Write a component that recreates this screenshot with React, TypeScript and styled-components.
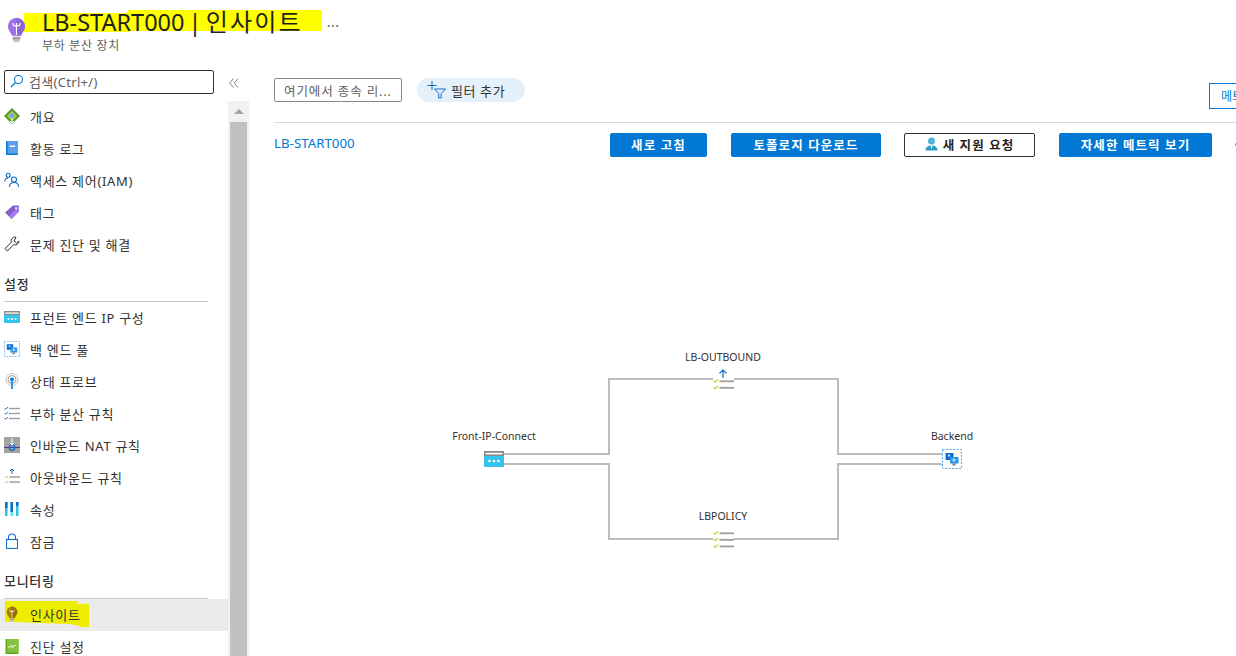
import React from 'react';
import styled, { createGlobalStyle } from 'styled-components';

const FONT = `"Noto Sans", "Noto Sans CJK KR", sans-serif`;

const Global = createGlobalStyle`
  html, body { margin: 0; padding: 0; background: #fff; }
  body { font-family: ${FONT}; color: #323130; }
  * { box-sizing: border-box; }
`;

const Page = styled.div`
  position: relative;
  width: 1236px;
  height: 656px;
  overflow: hidden;
  background: #fff;
  display: flex;
  flex-direction: column;
`;

/* ---------- header ---------- */
const Header = styled.header`
  position: relative;
  height: 70px;
  flex: none;
  display: flex;
  padding: 7px 0 0 7px;
  gap: 16px;
`;
const HeaderIcon = styled.div`
  width: 19px;
  margin-top: 10px;
  flex: none;
  position: relative;
  z-index: 2;
`;
const TitleBlock = styled.div`
  display: flex;
  flex-direction: column;
`;
const TitleRow = styled.div`
  display: flex;
  align-items: center;
  height: 30px;
`;
const Title = styled.h1`
  position: relative;
  z-index: 2;
  margin: 0;
  font-size: 23.5px;
  line-height: 30px;
  font-weight: 400;
  word-spacing: -2px;
  color: #1f1f1f;
  white-space: nowrap;
`;
const TitleKo = styled.span`
  font-size: 24px;
  letter-spacing: 2.2px;
`;
const More = styled.span`
  position: relative;
  z-index: 2;
  margin-left: 24px;
  margin-top: -2px;
  font-size: 14px;
  color: #605e5c;
  letter-spacing: 0.5px;
`;
const Subtitle = styled.div`
  font-size: 12px;
  line-height: 16px;
  color: #605e5c;
  margin-top: 1px;
  letter-spacing: 0.7px;
`;
const Marker = styled.div<{ $l: number; $t: number; $w: number; $h: number }>`
  position: absolute;
  left: ${p => p.$l}px;
  top: ${p => p.$t}px;
  width: ${p => p.$w}px;
  height: ${p => p.$h}px;
  background: #ffff00;
  z-index: 1;
`;

/* ---------- body ---------- */
const Body = styled.div`
  flex: 1;
  min-height: 0;
  display: flex;
`;
const Sidebar = styled.aside`
  width: 249px;
  flex: none;
  display: flex;
  flex-direction: column;
`;
const SearchRow = styled.div`
  height: 31px;
  flex: none;
  display: flex;
  align-items: flex-start;
  padding-left: 4px;
`;
const SearchBox = styled.div`
  width: 210px;
  height: 24px;
  border: 1px solid #323130;
  border-radius: 2px;
  display: flex;
  align-items: center;
  gap: 5px;
  padding: 0 0 2px 5px;
  font-size: 13px;
  letter-spacing: 0.3px;
  color: #605e5c;
`;
const Collapse = styled.span`
  margin-left: 15px;
  margin-top: 8px;
  line-height: 0;
`;
const SideBody = styled.div`
  flex: 1;
  min-height: 0;
  display: flex;
`;
const Nav = styled.nav`
  width: 228px;
  flex: none;
`;
const NavRow = styled.div<{ $active?: boolean }>`
  position: relative;
  height: 32px;
  display: flex;
  align-items: center;
  gap: 10px;
  padding: 0 0 2px 4px;
  font-size: 13px;
  color: #323130;
  letter-spacing: 0.7px;
  white-space: nowrap;
  background: ${p => (p.$active ? '#ebebeb' : 'transparent')};
  & > span { position: relative; z-index: 2; }
`;
const IconSlot = styled.span`
  width: 16px;
  height: 18px;
  flex: none;
  display: flex;
  align-items: center;
  justify-content: center;
`;
const SectionTitle = styled.div`
  margin: 15px 20px 0 4px;
  height: 26px;
  font-size: 13px;
  font-weight: 500;
  line-height: 17px;
  letter-spacing: 0.7px;
  color: #323130;
  border-bottom: 1px solid #c8c6c4;
`;
const RowMark = styled.div`
  position: absolute;
  left: 5px;
  top: 2px;
  width: 84px;
  height: 26px;
  background: #eded00;
  clip-path: polygon(0 0, 86% 0, 86% 11%, 100% 11%, 100% 100%, 89% 100%, 89% 96%, 77% 88%, 0 80%);
`;
const Scrollbar = styled.div`
  width: 21px;
  flex: none;
  background: #f1f1f1;
  display: flex;
  flex-direction: column;
`;
const ScrollUp = styled.div`
  height: 21px;
  flex: none;
  display: flex;
  align-items: center;
  justify-content: center;
  &::before {
    content: '';
    border-left: 5px solid transparent;
    border-right: 5px solid transparent;
    border-bottom: 5px solid #a3a3a3;
  }
`;
const ScrollThumb = styled.div`
  flex: 1;
  margin: 0 2px;
  background: #c1c1c1;
`;

/* ---------- main ---------- */
const Main = styled.main`
  flex: 1;
  min-width: 0;
  position: relative;
  padding: 8px 0 0 25px;
  display: flex;
  flex-direction: column;
`;
const FilterBar = styled.div`
  height: 45px;
  flex: none;
  display: flex;
  align-items: flex-start;
  gap: 15px;
  border-bottom: 1px solid #d9d9d9;
  position: relative;
`;
const DependencyInput = styled.div`
  width: 128px;
  height: 24px;
  border: 1px solid #8a8886;
  border-radius: 2px;
  display: flex;
  align-items: center;
  padding-left: 9px;
  font-size: 12.5px;
  color: #605e5c;
  letter-spacing: 0.9px;
  white-space: nowrap;
`;
const FilterPill = styled.div`
  width: 108px;
  height: 24px;
  border-radius: 12px;
  background: #e4f0fa;
  display: flex;
  align-items: center;
  padding-left: 10px;
  gap: 4px;
  font-size: 13px;
  color: #323130;
  letter-spacing: 0.6px;
  white-space: nowrap;
`;
const MetricTab = styled.div`
  position: absolute;
  left: 935px;
  top: 5px;
  width: 60px;
  height: 26px;
  border: 1px solid #0078d4;
  display: flex;
  align-items: center;
  padding-left: 11px;
  font-size: 12px;
  color: #0078d4;
  white-space: nowrap;
`;
const ActionRow = styled.div`
  position: relative;
  flex: none;
  height: 35px;
  padding-top: 10px;
  display: flex;
  align-items: flex-start;
`;
const ResourceLink = styled.a`
  width: 336px;
  flex: none;
  font-size: 13.3px;
  line-height: 20px;
  color: #0078d4;
`;
const ActionButton = styled.button<{ $w: number; $gap: number; $outline?: boolean }>`
  width: ${p => p.$w}px;
  height: 24px;
  margin-right: ${p => p.$gap}px;
  flex: none;
  border-radius: 2px;
  border: 1px solid ${p => (p.$outline ? '#323130' : '#0078d4')};
  background: ${p => (p.$outline ? '#fff' : '#0078d4')};
  color: ${p => (p.$outline ? '#1f1f1f' : '#fff')};
  font-family: ${FONT};
  font-size: 12.5px;
  font-weight: 700;
  letter-spacing: 1.1px;
  display: flex;
  align-items: center;
  justify-content: center;
  gap: 5px;
  padding: 0 0 2px;
  white-space: nowrap;
`;
const EdgeDot = styled.span`
  position: absolute;
  left: 961px;
  top: 20px;
  width: 3px;
  height: 3px;
  background: #8a8886;
  border-radius: 50%;
`;

/* ---------- diagram (free canvas, offset from page 249,70) ---------- */
const Canvas = styled.div`
  position: absolute;
  left: 0;
  top: 0;
  right: 0;
  bottom: 0;
  pointer-events: none;
`;
const Wires = styled.svg`
  position: absolute;
  left: 0;
  top: 0;
`;
const NodeLabel = styled.div<{ $x: number; $y: number }>`
  position: absolute;
  left: ${p => p.$x - 249}px;
  top: ${p => p.$y - 70}px;
  transform: translate(-50%, -50%);
  font-size: 10.5px;
  line-height: 14px;
  color: #323130;
  white-space: nowrap;
`;
const NodeIcon = styled.div<{ $x: number; $y: number }>`
  position: absolute;
  left: ${p => p.$x - 249}px;
  top: ${p => p.$y - 70}px;
  line-height: 0;
  background: #fff;
`;

/* ---------- icons ---------- */
const Bulb = ({ size = 19, c = '#9a72e6', d = '#7a55c5' }: { size?: number; c?: string; d?: string }) => (
  <svg width={size} height={size * 1.4} viewBox="0 0 22 31">
    <path d="M11 1a10 10 0 0 0-10 10c0 4 2.600 6.500 4 9 .5 1 .6 1.500.8 2h10.400c.2-.5.3-1 .8-2 1.400-2.500 4-5 4-9A10 10 0 0 0 11 1z" fill={c} />
    <path d="M11 1a10 10 0 0 1 10 10c0 4-2.600 6.500-4 9-.5 1-.6 1.500-.8 2H11z" fill={d} opacity=".45" />
    <path d="M11 21V10M7 7v1.500a2 2 0 0 0 4 0V7M11 8.500a2 2 0 0 0 4 0V7" fill="none" stroke="#fff" strokeWidth="1.300" />
    <rect x="6.500" y="23" width="9" height="3.500" rx="1" fill="#a19f9d" />
    <rect x="7.500" y="26.500" width="7" height="3" rx="1" fill="#c8c6c4" />
  </svg>
);
const SearchIcon = () => (
  <svg width="14" height="14" viewBox="0 0 14 14">
    <circle cx="8.500" cy="5.500" r="4" fill="none" stroke="#0078d4" strokeWidth="1.100" />
    <path d="M5.500 8.500L1 13" stroke="#0078d4" strokeWidth="1.200" />
  </svg>
);
const ChevronsLeft = () => (
  <svg width="10" height="10" viewBox="0 0 10 10" fill="none" stroke="#8a8886" strokeWidth="1">
    <path d="M4.500 .5L.7 5l3.800 4.500M9 .5L5.200 5 9 9.500" />
  </svg>
);
const OverviewIcon = () => (
  <svg width="16" height="16" viewBox="0 0 16 16">
    <path d="M8 0l8 8-8 8-8-8z" fill="#5e9624" />
    <path d="M8 3l5 5-5 5-5-5z" fill="#a4cf5c" />
    <circle cx="8" cy="7.500" r="2.200" fill="#6aa6e8" />
    <path d="M8 10v5M6 13l2 2 2-2" stroke="#fff" strokeWidth="1" fill="none" />
  </svg>
);
const LogIcon = () => (
  <svg width="16" height="16" viewBox="0 0 16 16">
    <rect x="2" y="1" width="12" height="14" rx="1" fill="#0078d4" />
    <rect x="3.500" y="1" width="10.500" height="12.500" fill="#5ea0ef" />
    <rect x="6" y="5.500" width="5" height="1.500" fill="#fff" />
  </svg>
);
const PeopleIcon = () => (
  <svg width="16" height="16" viewBox="0 0 16 16" fill="none" stroke="#0f6cc9" strokeWidth="1.100">
    <circle cx="4.200" cy="3.200" r="2" />
    <path d="M.7 9.500c0-2 1.500-3.300 3.500-3.300" />
    <circle cx="10" cy="7.500" r="2.500" />
    <path d="M5.500 15c0-3 2-4.500 4.500-4.500s4.500 1.500 4.500 4.500" />
  </svg>
);
const TagIcon = () => (
  <svg width="16" height="16" viewBox="0 0 16 16">
    <path d="M9 1.500h6v6L7.500 15 1 8.500z" fill="#8661c5" />
    <path d="M15 1.500v6L7.500 15 5 12.500z" fill="#a67af4" />
    <circle cx="12" cy="4.300" r="1" fill="#fff" />
  </svg>
);
const WrenchIcon = () => (
  <svg width="16" height="16" viewBox="0 0 16 16" fill="none" stroke="#323130" strokeWidth="1">
    <path d="M11 1a4 4 0 0 0-3.700 5.300L1 12.700 3.300 15l6.400-6.300A4 4 0 0 0 15 5l-2.500 2L10 5l2-3.700z" />
  </svg>
);
const FrontendIcon = ({ w = 16 }: { w?: number }) => (
  <svg width={w} height={w * 0.8} viewBox="0 0 20 16">
    <rect width="20" height="16" rx="1" fill="#35c4ec" />
    <rect width="20" height="5" fill="#8a8a8a" />
    <rect x="1.500" y="1.800" width="17" height="1.600" fill="#fff" />
    <circle cx="5.500" cy="10" r="1.300" fill="#fff" />
    <circle cx="10" cy="10" r="1.300" fill="#fff" />
    <circle cx="14.500" cy="10" r="1.300" fill="#fff" />
  </svg>
);
const PoolIcon = ({ w = 16 }: { w?: number }) => (
  <svg width={w} height={w} viewBox="0 0 20 20">
    <rect x=".5" y=".5" width="19" height="19" fill="#fff" stroke="#4ba3ec" strokeWidth="1" strokeDasharray="2 1.500" />
    <rect x="3.500" y="4" width="8" height="7" fill="#0f6cc9" />
    <rect x="8" y="8" width="8.500" height="6.500" fill="#2f97ea" />
    <circle cx="7" cy="6.500" r="1.300" fill="#9fd0f6" />
    <circle cx="12" cy="11" r="1.500" fill="#bfe2fb" />
    <rect x="10.500" y="14.500" width="3" height="2" fill="#7a7a7a" />
  </svg>
);
const ProbeIcon = () => (
  <svg width="16" height="16" viewBox="0 0 16 16" fill="none">
    <circle cx="8" cy="6.500" r="6" stroke="#c8c6c4" />
    <circle cx="8" cy="6.500" r="4" stroke="#a19f9d" />
    <circle cx="8" cy="6.500" r="2" fill="#0078d4" />
    <rect x="7" y="7" width="2" height="9" fill="#2f97ea" />
  </svg>
);
const RulesIcon = ({ color = '#0f6cc9', w = 16, rows = 3 }: { color?: string; w?: number; rows?: number }) => (
  <svg width={w} height={w * 0.875} viewBox="0 0 16 14" fill="none">
    {Array.from({ length: rows }).map((_, i) => {
      const y = 2 + i * 5;
      return (
        <g key={i}>
          <path d={`M.5 ${y}l1.200 1.200L4 ${y - 1}`} stroke={color} strokeWidth=".9" />
          <path d={`M5 ${y + 0.5}H16`} stroke="#a19f9d" strokeWidth="1.400" />
        </g>
      );
    })}
  </svg>
);
const InboundIcon = () => (
  <svg width="16" height="16" viewBox="0 0 16 16">
    <rect width="16" height="16" fill="#a3a3a3" />
    <path d="M0 10.500h16" stroke="#5c2d91" strokeWidth="1" />
    <circle cx="8" cy="10.500" r="2.800" fill="none" stroke="#0f6cc9" strokeWidth="1.300" />
    <path d="M8 1v7M6 6l2 2 2-2" stroke="#fff" strokeWidth="1" fill="none" />
  </svg>
);
const OutboundIcon = () => (
  <svg width="16" height="18" viewBox="0 0 16 18" fill="none">
    <path d="M8 6V1M6 3l2-2 2 2" stroke="#0f6cc9" strokeWidth="1" />
    <path d="M1 9l1 1 2-2M1 14l1 1 2-2" stroke="#b8d432" strokeWidth="1" />
    <path d="M5.500 9H16M5.500 14H16" stroke="#a19f9d" strokeWidth="1.300" />
  </svg>
);
const PropsIcon = () => (
  <svg width="16" height="16" viewBox="0 0 16 16">
    <rect x="1" y="1" width="2.500" height="14" fill="#32bedd" />
    <rect x="6.500" y="1" width="2.500" height="14" fill="#50e6ff" />
    <rect x="12" y="1" width="2.500" height="14" fill="#32bedd" />
    <rect x="1" y="1" width="2.500" height="6" fill="#0f6cc9" />
    <rect x="6.500" y="1" width="2.500" height="10" fill="#0f6cc9" />
    <rect x="12" y="1" width="2.500" height="4" fill="#0f6cc9" />
  </svg>
);
const LockIcon = () => (
  <svg width="16" height="16" viewBox="0 0 16 16" fill="none" stroke="#0f6cc9" strokeWidth="1.100">
    <rect x="2.500" y="6.500" width="11" height="9" />
    <path d="M4.500 6.500V4.500a3.500 3.500 0 0 1 7 0v2" />
  </svg>
);
const DiagIcon = () => (
  <svg width="16" height="16" viewBox="0 0 16 16">
    <rect x="1.500" y="1" width="13" height="15" fill="#5ea614" />
    <rect x="3" y="1" width="11.500" height="13.500" fill="#86c440" />
    <path d="M4 9h2l1.500-2 1 3 1.500-2.500h2" stroke="#fff" strokeWidth=".8" fill="none" />
  </svg>
);
const FilterIcon = () => (
  <svg width="20" height="18" viewBox="0 0 20 18" fill="none" stroke="#0f6cc9" strokeWidth="1">
    <path d="M5 0v9M.5 4.500h9" />
    <path d="M7.500 8h11l-4.300 4.500V17h-2.500v-4.500z" />
  </svg>
);
const PersonIcon = () => (
  <svg width="13" height="14" viewBox="0 0 13 14">
    <circle cx="6.500" cy="4" r="3.500" fill="#4fb4dc" />
    <path d="M.5 13.500c0-3.500 2.500-5 6-5s6 1.500 6 5z" fill="#2f9cc6" />
    <path d="M5.500 8.500h2L6.500 12z" fill="#fff" />
  </svg>
);
const OutArrow = () => (
  <svg width="10" height="9" viewBox="0 0 10 9" fill="none" stroke="#0f6cc9" strokeWidth="1.200">
    <path d="M5 9V1M1.500 4.200L5 1l3.500 3.200" />
  </svg>
);

/* ---------- data ---------- */
type Item = { label: string; icon: React.ReactNode; active?: boolean };
type Section = { title?: string; items: Item[] };

const sections: Section[] = [
  {
    items: [
      { label: '개요', icon: <OverviewIcon /> },
      { label: '활동 로그', icon: <LogIcon /> },
      { label: '액세스 제어(IAM)', icon: <PeopleIcon /> },
      { label: '태그', icon: <TagIcon /> },
      { label: '문제 진단 및 해결', icon: <WrenchIcon /> },
    ],
  },
  {
    title: '설정',
    items: [
      { label: '프런트 엔드 IP 구성', icon: <FrontendIcon /> },
      { label: '백 엔드 풀', icon: <PoolIcon /> },
      { label: '상태 프로브', icon: <ProbeIcon /> },
      { label: '부하 분산 규칙', icon: <RulesIcon /> },
      { label: '인바운드 NAT 규칙', icon: <InboundIcon /> },
      { label: '아웃바운드 규칙', icon: <OutboundIcon /> },
      { label: '속성', icon: <PropsIcon /> },
      { label: '잠금', icon: <LockIcon /> },
    ],
  },
  {
    title: '모니터링',
    items: [
      { label: '인사이트', icon: <Bulb size={12} c="#a87f00" d="#7a5c00" />, active: true },
      { label: '진단 설정', icon: <DiagIcon /> },
    ],
  },
];

const buttons = [
  { label: '새로 고침', w: 97, gap: 24 },
  { label: '토폴로지 다운로드', w: 150, gap: 23 },
  { label: '새 지원 요청', w: 131, gap: 24, outline: true },
  { label: '자세한 메트릭 보기', w: 153, gap: 0 },
];

const X = (v: number) => v - 249;
const Y = (v: number) => v - 70;
const wirePath = (pts: [number, number][]) =>
  pts.map(([x, y], i) => `${i ? 'L' : 'M'}${X(x)} ${Y(y)}`).join(' ');

const upperWire = wirePath([[504, 454], [609, 454], [609, 379], [838, 379], [838, 454], [945, 454]]);
const lowerWire = wirePath([[504, 464], [609, 464], [609, 539], [838, 539], [838, 464], [945, 464]]);

export default function App() {
  return (
    <Page>
      <Global />
      <Marker $l={24} $t={13} $w={105} $h={19} />
      <Marker $l={128} $t={10} $w={194} $h={21} />
      <Header>
        <HeaderIcon>
          <Bulb />
        </HeaderIcon>
        <TitleBlock>
          <TitleRow>
            <Title>LB-START000 | <TitleKo>인사이트</TitleKo></Title>
            <More>...</More>
          </TitleRow>
          <Subtitle>부하 분산 장치</Subtitle>
        </TitleBlock>
      </Header>
      <Body>
        <Sidebar>
          <SearchRow>
            <SearchBox>
              <SearchIcon />
              검색(Ctrl+/)
            </SearchBox>
            <Collapse><ChevronsLeft /></Collapse>
          </SearchRow>
          <SideBody>
            <Nav>
              {sections.map((s, i) => (
                <React.Fragment key={i}>
                  {s.title && <SectionTitle>{s.title}</SectionTitle>}
                  {s.items.map(it => (
                    <NavRow key={it.label} $active={it.active}>
                      {it.active && <RowMark />}
                      <IconSlot>{it.icon}</IconSlot>
                      <span>{it.label}</span>
                    </NavRow>
                  ))}
                </React.Fragment>
              ))}
            </Nav>
            <Scrollbar>
              <ScrollUp />
              <ScrollThumb />
            </Scrollbar>
          </SideBody>
        </Sidebar>
        <Main>
          <FilterBar>
            <DependencyInput>여기에서 종속 리...</DependencyInput>
            <FilterPill>
              <FilterIcon />
              <span>필터 추가</span>
            </FilterPill>
            <MetricTab>메트릭</MetricTab>
          </FilterBar>
          <ActionRow>
            <ResourceLink>LB-START000</ResourceLink>
            {buttons.map(b => (
              <ActionButton key={b.label} $w={b.w} $gap={b.gap} $outline={b.outline}>
                {b.outline && <PersonIcon />}
                {b.label}
              </ActionButton>
            ))}
            <EdgeDot />
          </ActionRow>
          <Canvas>
            <Wires width="988" height="586" fill="none" stroke="#bcbcbc" strokeWidth="2">
              <path d={upperWire} />
              <path d={lowerWire} />
            </Wires>
            <NodeLabel $x={494} $y={436}>Front-IP-Connect</NodeLabel>
            <NodeIcon $x={484} $y={451}><FrontendIcon w={20} /></NodeIcon>
            <NodeLabel $x={723} $y={357}>LB-OUTBOUND</NodeLabel>
            <NodeIcon $x={718} $y={369}><OutArrow /></NodeIcon>
            <NodeIcon $x={713} $y={378}><RulesIcon color="#b8d432" w={21} rows={2} /></NodeIcon>
            <NodeLabel $x={723} $y={516}>LBPOLICY</NodeLabel>
            <NodeIcon $x={713} $y={530}><RulesIcon color="#b8d432" w={21} /></NodeIcon>
            <NodeLabel $x={952} $y={436}>Backend</NodeLabel>
            <NodeIcon $x={942} $y={449}><PoolIcon w={20} /></NodeIcon>
          </Canvas>
        </Main>
      </Body>
    </Page>
  );
}
